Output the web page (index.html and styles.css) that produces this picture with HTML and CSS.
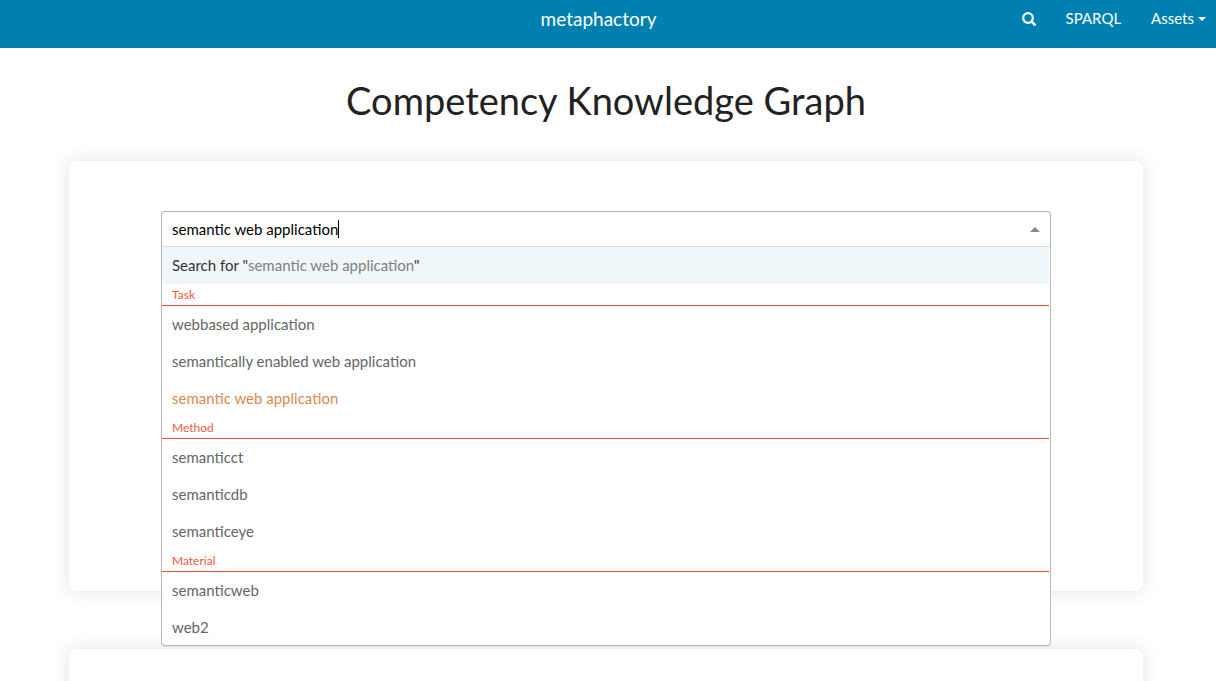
FILE: index.html
```html
<!DOCTYPE html>
<html lang="en">
<head>
<meta charset="utf-8">
<title>Competency Knowledge Graph</title>
<link rel="stylesheet" href="styles.css">
</head>
<body>
<header class="topbar">
  <a class="brand" href="#">metaphactory</a>
  <nav class="nav">
    <a class="nav-link" href="#" aria-label="Search">
      <svg class="search-icon" viewBox="0 0 14 14" fill="none" stroke="currentColor" stroke-width="2.2"><circle cx="6" cy="6" r="4.8"/><path d="M9.6 9.6L12.7 12.7" stroke-width="2.6" stroke-linecap="round"/></svg>
    </a>
    <a class="nav-link" href="#">SPARQL</a>
    <button class="nav-link nav-button" type="button">Assets<span class="caret-down"></span></button>
  </nav>
</header>
<main class="page">
  <h1 class="title">Competency Knowledge Graph</h1>
  <section class="card search-card">
    <div class="select">
      <div class="control">
        <input class="query" type="text" aria-label="Search" value="semantic web application">
        <span class="text-cursor"></span>
        <button class="toggle" type="button" aria-label="Close suggestions"><span class="arrow-up"></span></button>
      </div>
      <div class="menu">
        <button class="option active" type="button">Search for "<span class="term">semantic web application</span>"</button>
        <h2 class="group">Task</h2>
        <button class="option" type="button">webbased application</button>
        <button class="option" type="button">semantically enabled web application</button>
        <button class="option match" type="button">semantic web application</button>
        <h2 class="group">Method</h2>
        <button class="option" type="button">semanticct</button>
        <button class="option" type="button">semanticdb</button>
        <button class="option" type="button">semanticeye</button>
        <h2 class="group">Material</h2>
        <button class="option" type="button">semanticweb</button>
        <button class="option" type="button">web2</button>
      </div>
    </div>
  </section>
  <section class="card"></section>
</main>
</body>
</html>
```
FILE: styles.css
```css
* {
  box-sizing: border-box;
}

body {
  margin: 0;
  height: 100vh;
  overflow: hidden;
  background: #fff;
  color: #222;
  font-family: Lato, sans-serif;
  font-size: 15px;
  line-height: 21px;
}

button,
input {
  margin: 0;
  padding: 0;
  border: 0;
  background: none;
  color: inherit;
  font: inherit;
}

.topbar {
  display: grid;
  grid-template-columns: 1fr auto 1fr;
  align-items: start;
  height: 48px;
  padding: 8px 10px 0 0;
  background: #0080b0;
  color: #fff;
}

.brand {
  grid-column: 2;
  margin-right: 9px;
  color: inherit;
  font-size: 19px;
  line-height: 21px;
  text-decoration: none;
}

.nav {
  display: flex;
  justify-content: flex-end;
  gap: 30px;
}

.nav-link {
  display: flex;
  align-items: center;
  color: inherit;
  text-decoration: none;
}

.nav-button {
  gap: 4px;
}

.search-icon {
  width: 14px;
  height: 14px;
}

.caret-down {
  border: 4px solid transparent;
  border-top-color: currentColor;
  border-bottom: 0;
}

.page {
  padding: 26px 73px 0 69px;
}

.title {
  margin: 0 0 35px;
  font-size: 38px;
  font-weight: 400;
  line-height: 52px;
  text-align: center;
}

.card {
  min-height: 430px;
  border-radius: 8px;
  background: #fff;
  box-shadow: 0 0 18px rgba(0, 0, 0, 0.12);
}

.card + .card {
  margin-top: 58px;
}

.search-card {
  padding: 50px 92px;
}

.select {
  position: relative;
}

.control {
  display: flex;
  align-items: center;
  height: 36px;
  padding: 0 10px;
  border: 1px solid #b3b3b3;
  border-bottom-color: #ddd;
  border-radius: 4px 4px 0 0;
  background: #fff;
  color: #000;
}

.query {
  field-sizing: content;
  height: 21px;
  outline: 0;
}

.text-cursor {
  width: 1px;
  height: 18px;
  background: #000;
}

.toggle {
  display: flex;
  margin-left: auto;
}

.arrow-up {
  border: 5px solid transparent;
  border-top: 0;
  border-bottom-color: #888;
}

.menu {
  position: absolute;
  top: 100%;
  left: 0;
  right: 0;
  z-index: 1;
  padding-right: 1px;
  border: 1px solid #bbb;
  border-top: 0;
  border-radius: 0 0 4px 4px;
  background: #fff;
  box-shadow: 0 1px 0 rgba(0, 0, 0, 0.06);
}

.option {
  display: block;
  width: 100%;
  padding: 8px 10px;
  color: #666;
  text-align: left;
}

.option:last-child {
  padding-bottom: 7px;
}

.active {
  background: #eff7fb;
  color: #333;
}

.term {
  color: #808080;
}

.match {
  color: #dc8850;
}

.group {
  margin: 0;
  padding: 3px 10px;
  border-bottom: 1px solid #f04e30;
  color: #f5573b;
  font-size: 12px;
  font-weight: 400;
  line-height: 15px;
}
```
